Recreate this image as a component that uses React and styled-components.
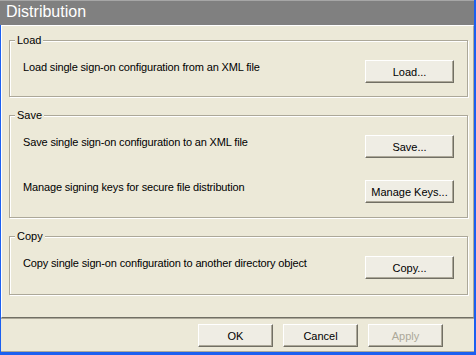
import styled, { createGlobalStyle } from "styled-components";

const GlobalStyle = createGlobalStyle`
  html, body {
    margin: 0;
    padding: 0;
    background: #ffffff;
  }
  body {
    font-family: "Liberation Sans", Arial, sans-serif;
    font-size: 11px;
  }
`;

const Frame = styled.div`
  width: 476px;
  height: 355px;
  box-sizing: border-box;
  border-right: 2px solid #1b5ff0;
  border-bottom: 3px solid #1b5ff0;
  display: flex;
  flex-direction: column;
  background: #ece9d8;
`;

const TitleBar = styled.div`
  height: 25px;
  box-sizing: border-box;
  background: #808080;
  border-top: 1px solid #a6a6a6;
  color: #ffffff;
  font-size: 16px;
  line-height: 22px;
  padding-left: 6px;
`;

const Client = styled.div`
  flex: 1;
  display: flex;
  flex-direction: column;
  border-left: 1px solid #1b5ff0;
`;

const Panel = styled.div`
  height: 293px;
  box-sizing: border-box;
  border-top: 1px solid #ffffff;
  border-left: 1px solid #ffffff;
  border-right: 1px solid #aca899;
  border-bottom: 1px solid #716f64;
  padding: 8px 5px 0 7px;
  display: flex;
  flex-direction: column;
  gap: 12px;
`;

const Group = styled.fieldset`
  margin: 0;
  min-width: 0;
  border: 1px solid #aca899;
  box-shadow: 1px 1px 0 #ffffff, inset 1px 1px 0 #ffffff;
  padding: 13px 13px ${(p) => p.$bottom || 13}px 13px;
  display: flex;
  flex-direction: column;
  gap: 22px;
`;

const Legend = styled.legend`
  margin-left: -8px;
  padding: 0 2px;
  line-height: 13px;
  color: #000000;
  background: #ece9d8;
`;

const Row = styled.div`
  display: flex;
  justify-content: space-between;
  align-items: flex-start;
`;

const Label = styled.span`
  line-height: 13px;
  padding-top: 1px;
  letter-spacing: -0.15px;
  color: #000000;
`;

const Button = styled.button`
  width: ${(p) => p.$w || 89}px;
  height: 23px;
  box-sizing: border-box;
  margin: 0;
  padding: 0;
  font-family: inherit;
  font-size: 11px;
  color: ${(p) => (p.disabled ? "#aca899" : "#000000")};
  background: #efede4;
  border: 1px solid;
  border-color: #ffffff #716f64 #716f64 #ffffff;
  box-shadow: inset -1px -1px 0 #aca899;
  border-radius: 0;
`;

const Footer = styled.div`
  flex: 1;
  display: flex;
  justify-content: flex-end;
  align-items: flex-start;
  gap: 10px;
  border-top: 1px solid #aca899;
  border-bottom: 1px solid #aca899;
  padding: 5px 31px 0 0;
`;

const groups = [
  {
    title: "Load",
    bottom: 13,
    rows: [["Load single sign-on configuration from an XML file", "Load..."]],
  },
  {
    title: "Save",
    bottom: 14,
    rows: [
      ["Save single sign-on configuration to an XML file", "Save..."],
      ["Manage signing keys for secure file distribution", "Manage Keys..."],
    ],
  },
  {
    title: "Copy",
    bottom: 15,
    rows: [["Copy single sign-on configuration to another directory object", "Copy..."]],
  },
];

const App = () => {
  return (
    <>
      <GlobalStyle />
      <Frame>
        <TitleBar>Distribution</TitleBar>
        <Client>
          <Panel>
            {groups.map((g) => (
              <Group key={g.title} $bottom={g.bottom}>
                <Legend>{g.title}</Legend>
                {g.rows.map(([text, action]) => (
                  <Row key={action}>
                    <Label>{text}</Label>
                    <Button>{action}</Button>
                  </Row>
                ))}
              </Group>
            ))}
          </Panel>
          <Footer>
            <Button $w={75}>OK</Button>
            <Button $w={75}>Cancel</Button>
            <Button $w={75} disabled>
              Apply
            </Button>
          </Footer>
        </Client>
      </Frame>
    </>
  );
};

export default App;
